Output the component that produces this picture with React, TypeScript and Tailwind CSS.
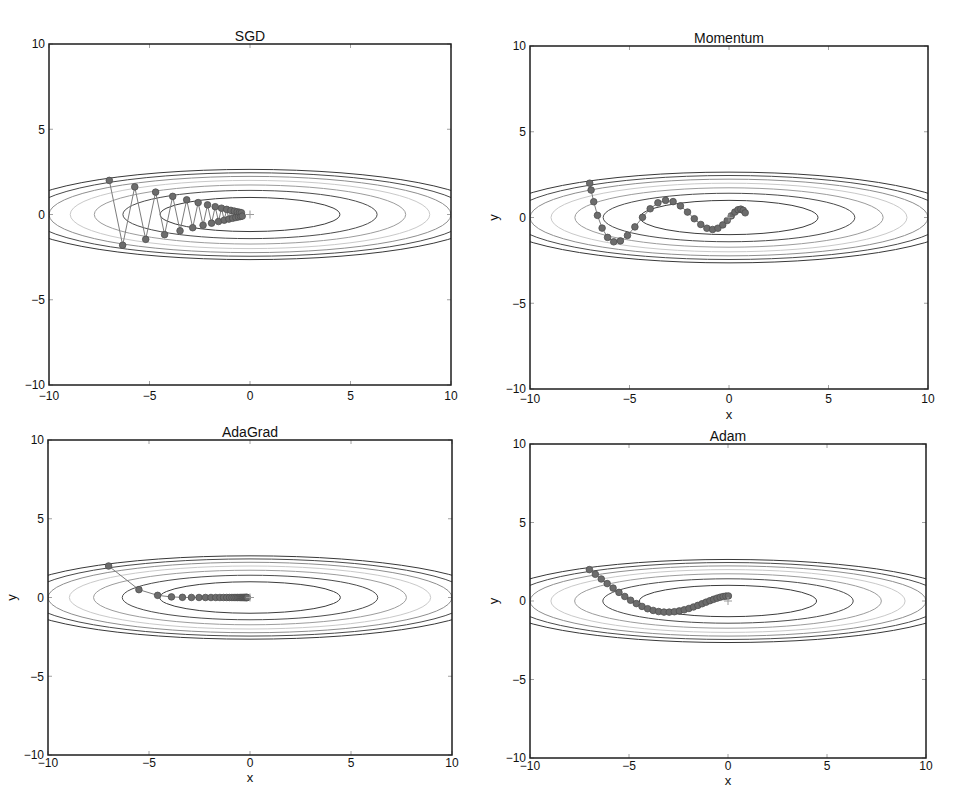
import React from "react"

type Pt = [number, number]

const grad = (x: number, y: number): Pt => [x / 10, 2 * y]

// f(x, y) = x^2 / 20 + y^2, start at (-7, 2), 30 steps
function sgdPath(): Pt[] {
  let x = -7
  let y = 2
  const out: Pt[] = []
  for (let i = 0; i < 30; i++) {
    out.push([x, y])
    const [gx, gy] = grad(x, y)
    x -= 0.95 * gx
    y -= 0.95 * gy
  }
  return out
}

function momentumPath(): Pt[] {
  let x = -7
  let y = 2
  let vx = 0
  let vy = 0
  const out: Pt[] = []
  for (let i = 0; i < 30; i++) {
    out.push([x, y])
    const [gx, gy] = grad(x, y)
    vx = 0.9 * vx - 0.1 * gx
    vy = 0.9 * vy - 0.1 * gy
    x += vx
    y += vy
  }
  return out
}

function adagradPath(): Pt[] {
  let x = -7
  let y = 2
  let hx = 0
  let hy = 0
  const out: Pt[] = []
  for (let i = 0; i < 30; i++) {
    out.push([x, y])
    const [gx, gy] = grad(x, y)
    hx += gx * gx
    hy += gy * gy
    x -= (1.5 * gx) / (Math.sqrt(hx) + 1e-7)
    y -= (1.5 * gy) / (Math.sqrt(hy) + 1e-7)
  }
  return out
}

function adamPath(): Pt[] {
  let x = -7
  let y = 2
  let mx = 0
  let my = 0
  let vx = 0
  let vy = 0
  const b1 = 0.9
  const b2 = 0.999
  const out: Pt[] = []
  for (let i = 1; i <= 30; i++) {
    out.push([x, y])
    const [gx, gy] = grad(x, y)
    const lrt = (0.3 * Math.sqrt(1 - Math.pow(b2, i))) / (1 - Math.pow(b1, i))
    mx += (1 - b1) * (gx - mx)
    my += (1 - b1) * (gy - my)
    vx += (1 - b2) * (gx * gx - vx)
    vy += (1 - b2) * (gy * gy - vy)
    x -= (lrt * mx) / (Math.sqrt(vx) + 1e-7)
    y -= (lrt * my) / (Math.sqrt(vy) + 1e-7)
  }
  return out
}

const levels = [1, 2, 3, 4, 5, 6, 7]
const levelColors = ["#3c3c3c", "#4c4c4c", "#9c9c9c", "#c9c9c9", "#8e8e8e", "#4a4a4a", "#383838"]
const ticks = [-10, -5, 0, 5, 10]
const label = (v: number) => (v < 0 ? `\u2212${-v}` : `${v}`)

interface PlotProps {
  id: string
  title: string
  w: number
  h: number
  box: { l: number; r: number; t: number; b: number }
  titleY: number
  tickY: number
  xLabelY: number
  yLabelX?: number
  path: Pt[]
}

function Plot({ id, title, w, h, box, titleY, tickY, xLabelY, yLabelX, path }: PlotProps) {
  const sx = (box.r - box.l) / 20
  const sy = (box.b - box.t) / 20
  const cx = (box.l + box.r) / 2
  const cy = (box.t + box.b) / 2
  const px = (x: number) => cx + x * sx
  const py = (y: number) => cy - y * sy

  return (
    <svg width={w} height={h} className="block font-['Liberation_Sans',Arial,sans-serif]">
      <defs>
        <clipPath id={`clip-${id}`}>
          <rect x={box.l} y={box.t} width={box.r - box.l} height={box.b - box.t} />
        </clipPath>
      </defs>

      <g clipPath={`url(#clip-${id})`} fill="none">
        {levels.map((lv, i) => (
          <ellipse
            key={lv}
            cx={cx}
            cy={cy}
            rx={Math.sqrt(20 * lv) * sx}
            ry={Math.sqrt(lv) * sy}
            stroke={levelColors[i]}
            strokeWidth={1}
          />
        ))}
        <polyline
          points={path.map(([x, y]) => `${px(x)},${py(y)}`).join(" ")}
          stroke="#7c7c7c"
          strokeWidth={1}
        />
        {path.map(([x, y], i) => (
          <circle key={i} cx={px(x)} cy={py(y)} r={3.3} fill="#6c6c6c" stroke="#4f4f4f" strokeWidth={0.8} />
        ))}
        <path d={`M${cx - 4} ${cy}h8M${cx} ${cy - 4}v8`} stroke="#9a9a9a" strokeWidth={1} />
      </g>

      {/* tick marks on all four sides, pointing in */}
      <g stroke="#8a8a8a" strokeWidth={0.8}>
        {ticks.map((v) => (
          <g key={v}>
            <line x1={px(v)} x2={px(v)} y1={box.t} y2={box.t + 4} />
            <line x1={px(v)} x2={px(v)} y1={box.b} y2={box.b - 4} />
            <line x1={box.l} x2={box.l + 4} y1={py(v)} y2={py(v)} />
            <line x1={box.r} x2={box.r - 4} y1={py(v)} y2={py(v)} />
          </g>
        ))}
      </g>

      <rect
        x={box.l}
        y={box.t}
        width={box.r - box.l}
        height={box.b - box.t}
        fill="none"
        stroke="#1e1e1e"
        strokeWidth={1.5}
      />

      <g fill="#111" fontSize={12}>
        {ticks.map((v) => (
          <text key={`y${v}`} x={box.l - 4} y={py(v) + 4.3} textAnchor="end">
            {label(v)}
          </text>
        ))}
        {ticks.map((v) => (
          <text key={`x${v}`} x={px(v)} y={tickY} textAnchor="middle">
            {label(v)}
          </text>
        ))}
      </g>

      <text x={cx} y={titleY} textAnchor="middle" fontSize={14} fill="#111">
        {title}
      </text>
      <text x={cx} y={xLabelY} textAnchor="middle" fontSize={13} fill="#111">
        x
      </text>
      {yLabelX !== undefined && (
        <text
          x={yLabelX}
          y={cy}
          textAnchor="middle"
          fontSize={13}
          fill="#111"
          transform={`rotate(-90 ${yLabelX} ${cy})`}
        >
          y
        </text>
      )}
    </svg>
  )
}

export default function App() {
  return (
    <div className="flex w-[957px] h-[790px] bg-white overflow-hidden">
      <div className="flex flex-col w-[478px]">
        <div className="h-[411px] overflow-hidden">
          <Plot
            id="sgd"
            title="SGD"
            w={478}
            h={411}
            box={{ l: 49, r: 451, t: 44, b: 385 }}
            titleY={41}
            tickY={400}
            xLabelY={418}
            path={sgdPath()}
          />
        </div>
        <div className="h-[379px] overflow-hidden">
          <Plot
            id="adagrad"
            title="AdaGrad"
            w={478}
            h={379}
            box={{ l: 48, r: 452, t: 29, b: 344 }}
            titleY={26}
            tickY={356}
            xLabelY={371}
            yLabelX={16}
            path={adagradPath()}
          />
        </div>
      </div>
      <div className="flex flex-col w-[479px]">
        <div className="h-[424px] overflow-hidden">
          <Plot
            id="momentum"
            title="Momentum"
            w={479}
            h={424}
            box={{ l: 52, r: 450, t: 46, b: 389 }}
            titleY={43}
            tickY={403}
            xLabelY={419}
            yLabelX={20}
            path={momentumPath()}
          />
        </div>
        <div className="h-[366px] overflow-hidden">
          <Plot
            id="adam"
            title="Adam"
            w={479}
            h={366}
            box={{ l: 52, r: 448, t: 20, b: 334 }}
            titleY={17}
            tickY={346}
            xLabelY={361}
            yLabelX={20}
            path={adamPath()}
          />
        </div>
      </div>
    </div>
  )
}
